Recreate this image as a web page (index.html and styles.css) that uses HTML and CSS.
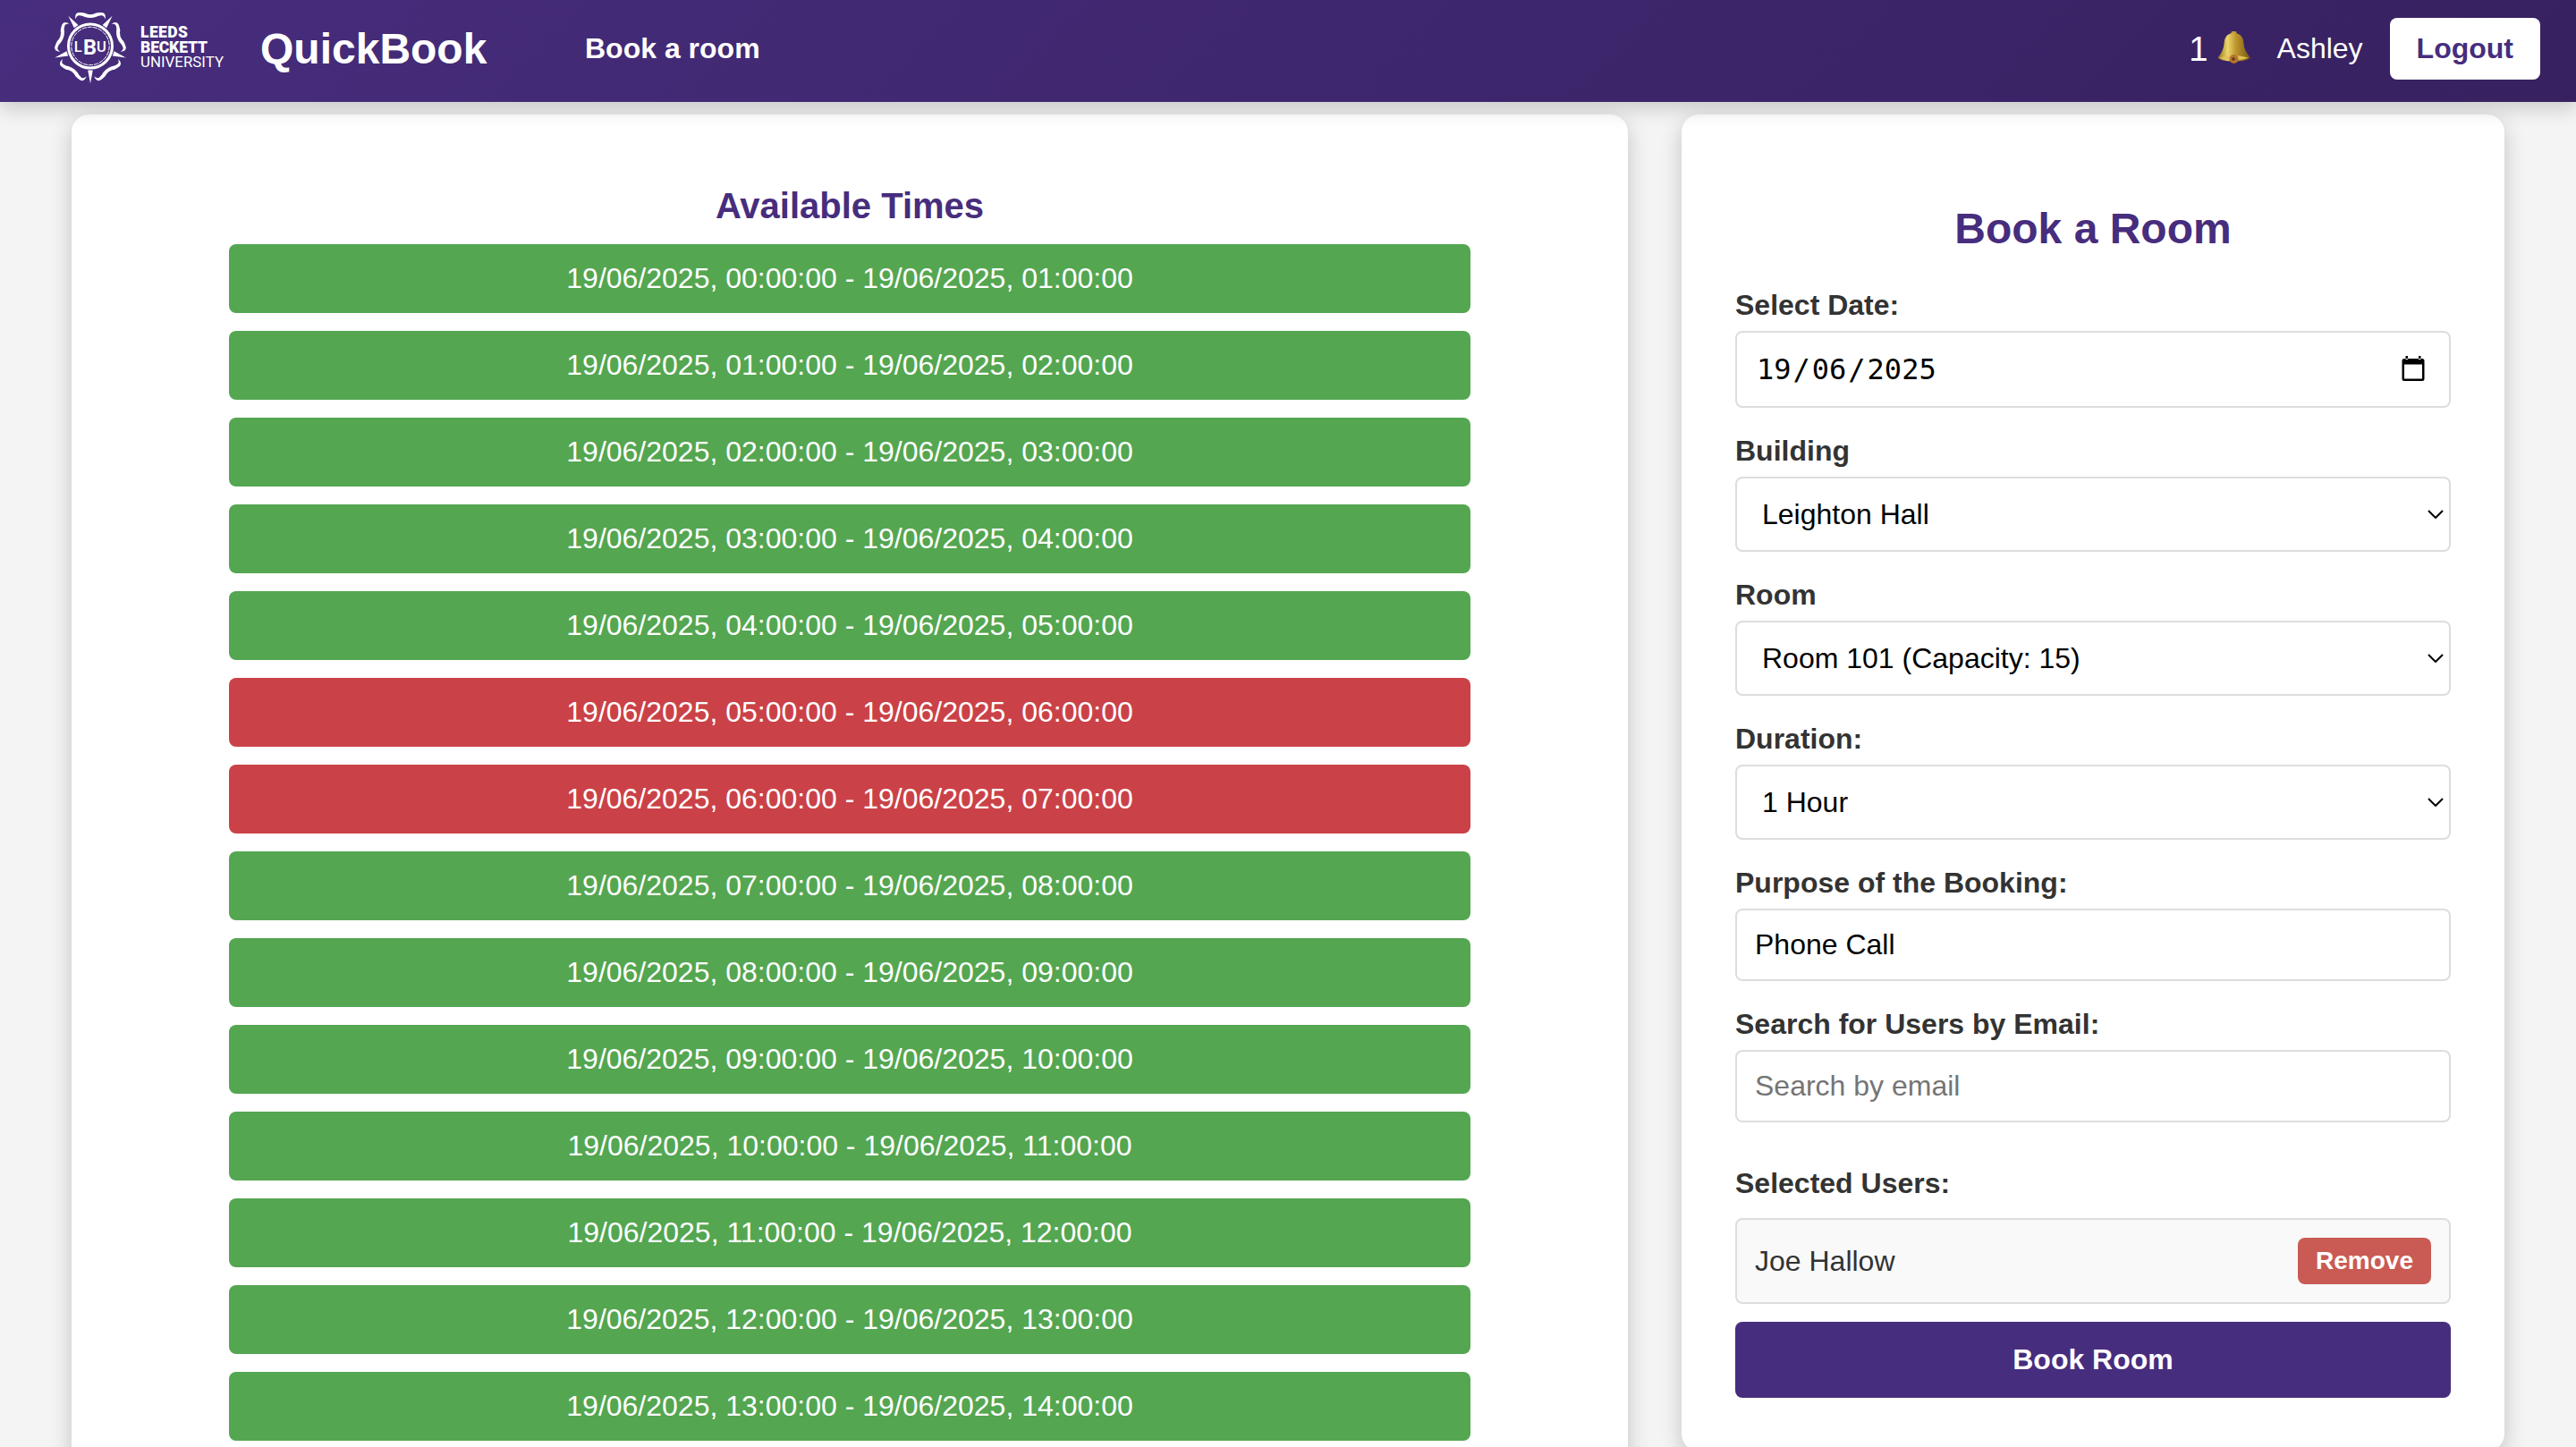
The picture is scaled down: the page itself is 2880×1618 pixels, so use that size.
FILE: index.html
```
<!DOCTYPE html>
<html lang="en">
<head>
<meta charset="utf-8">
<title>QuickBook</title>
<link rel="stylesheet" href="styles.css">
</head>
<body>
<header class="navbar">
  <svg class="logo" width="192" height="84" viewBox="0 0 192 84" role="img" aria-label="Leeds Beckett University">
    <g transform="translate(41 36.500)">
      <g fill="none" stroke="#fff">
        <circle r="24.500" stroke-width="3"/>
        <circle r="21.200" stroke-width="1" stroke-dasharray="5 1"/>
      </g>
      <g fill="#fff">
        <g id="petal">
          <path d="M-16.500 -30 Q-17.500 -34.500 -15.500 -36.500 Q-14 -38 -10 -37.500 Q-6 -37.500 -4 -36 Q0 -34.500 4 -36 Q6 -37.500 10 -37.500 Q14 -38 15.500 -36.500 Q17.500 -34.500 16.500 -30 Q15.500 -34 13 -34.300 Q9.500 -34.500 6 -32.500 Q0 -30.500 -6 -32.500 Q-9.500 -34.500 -13 -34.300 Q-15.500 -34 -16.500 -30 Z"/>
          <path transform="rotate(36)" d="M-2.800 -27 L0 -41.800 L2.800 -27 Z"/>
        </g>
        <use href="#petal" transform="rotate(72)"/>
        <use href="#petal" transform="rotate(144)"/>
        <use href="#petal" transform="rotate(216)"/>
        <use href="#petal" transform="rotate(288)"/>
      </g>
    </g>
    <g class="crest-text" fill="#fff">
      <text x="27.300" y="43" font-size="16.500" font-weight="500" text-anchor="middle">L</text>
      <text x="40.500" y="45.500" font-size="23.500" font-weight="700" text-anchor="middle">B</text>
      <text x="53.500" y="43" font-size="16.500" font-weight="500" text-anchor="middle">U</text>
      <text x="97" y="27.300" font-size="17.500" font-weight="900" textLength="53">LEEDS</text>
      <text x="97" y="43.700" font-size="17.500" font-weight="900" textLength="75">BECKETT</text>
      <text x="97" y="59.500" font-size="16.800" textLength="93">UNIVERSITY</text>
    </g>
  </svg>
  <div class="brand">QuickBook</div>
  <nav class="nav-links"><a>Book a room</a></nav>
  <div class="account">
    <div class="notifications">
      <span>1</span>
      <svg class="bell" width="38" height="38" viewBox="0 0 38 38">
        <defs>
          <linearGradient id="gold" x1="0" x2="1">
            <stop offset="0" stop-color="#8f7019"/><stop offset=".3" stop-color="#ecd56c"/>
            <stop offset=".55" stop-color="#bd972d"/><stop offset="1" stop-color="#755714"/>
          </linearGradient>
        </defs>
        <rect x="15.500" y="0" width="6" height="4" rx="1.500" fill="#c39b33"/>
        <path d="M7.500 14 Q8 2 18.500 2 Q29 2 29.500 14 Q30 22 37 29.500 Q33 33.500 18.500 33.500 Q4 33.500 .500 29.500 Q7 22 7.500 14 Z" fill="url(#gold)"/>
        <path d="M2.500 29.500 Q18 24.500 34.500 29.500 Q30 32 18.500 32 Q7 32 2.500 29.500 Z" fill="#e2c158"/>
        <circle cx="18.500" cy="31" r="5" fill="#b57430"/>
        <circle cx="18" cy="31" r="1.800" fill="#5a3a12"/>
      </svg>
    </div>
    <span class="user">Ashley</span>
    <button class="logout">Logout</button>
  </div>
</header>
<main class="page">
  <section class="card times">
    <h3>Available Times</h3>
    <ul class="slots">
      <li>19/06/2025, 00:00:00 - 19/06/2025, 01:00:00</li>
      <li>19/06/2025, 01:00:00 - 19/06/2025, 02:00:00</li>
      <li>19/06/2025, 02:00:00 - 19/06/2025, 03:00:00</li>
      <li>19/06/2025, 03:00:00 - 19/06/2025, 04:00:00</li>
      <li>19/06/2025, 04:00:00 - 19/06/2025, 05:00:00</li>
      <li class="booked">19/06/2025, 05:00:00 - 19/06/2025, 06:00:00</li>
      <li class="booked">19/06/2025, 06:00:00 - 19/06/2025, 07:00:00</li>
      <li>19/06/2025, 07:00:00 - 19/06/2025, 08:00:00</li>
      <li>19/06/2025, 08:00:00 - 19/06/2025, 09:00:00</li>
      <li>19/06/2025, 09:00:00 - 19/06/2025, 10:00:00</li>
      <li>19/06/2025, 10:00:00 - 19/06/2025, 11:00:00</li>
      <li>19/06/2025, 11:00:00 - 19/06/2025, 12:00:00</li>
      <li>19/06/2025, 12:00:00 - 19/06/2025, 13:00:00</li>
      <li>19/06/2025, 13:00:00 - 19/06/2025, 14:00:00</li>
    </ul>
  </section>
  <section class="card booking">
    <h2>Book a Room</h2>
    <div class="label">Select Date:</div>
    <div class="field date">
      <span>19<i>/</i>06<i>/</i>2025</span>
      <svg width="26" height="30" viewBox="0 0 26 30"><path d="M3 3h20a2.500 2.500 0 0 1 2.500 2.500v20a2.500 2.500 0 0 1-2.500 2.500H3a2.500 2.500 0 0 1-2.500-2.500v-20A2.500 2.500 0 0 1 3 3ZM3 9.500v16h20v-16ZM4.500 0h2.500v4h-2.500ZM19 0h2.500v4h-2.500Z" fill="#000" fill-rule="evenodd"/></svg>
    </div>
    <div class="label">Building</div>
    <div class="field select"><span>Leighton Hall</span><svg class="chevron" viewBox="0 0 18 10"><path d="M1 1l8 8 8-8"/></svg></div>
    <div class="label">Room</div>
    <div class="field select"><span>Room 101 (Capacity: 15)</span><svg class="chevron" viewBox="0 0 18 10"><path d="M1 1l8 8 8-8"/></svg></div>
    <div class="label">Duration:</div>
    <div class="field select"><span>1 Hour</span><svg class="chevron" viewBox="0 0 18 10"><path d="M1 1l8 8 8-8"/></svg></div>
    <div class="label">Purpose of the Booking:</div>
    <div class="field">Phone Call</div>
    <div class="label">Search for Users by Email:</div>
    <div class="field placeholder">Search by email</div>
    <div class="label selected-label">Selected Users:</div>
    <div class="selected-user"><span>Joe Hallow</span><button class="remove">Remove</button></div>
    <button class="submit">Book Room</button>
  </section>
</main>
</body>
</html>
```
FILE: styles.css
```
* { box-sizing: border-box; }
body {
  margin: 0;
  height: 1618px;
  overflow: hidden;
  background: #f4f4f4;
  color: #333;
  font: 32px/37px "Liberation Sans", Arial, sans-serif;
}
button { border: 0; font: inherit; font-weight: 700; }

.navbar {
  position: relative;
  z-index: 1;
  display: flex;
  align-items: center;
  height: 114px;
  padding: 0 40px 5px 60px;
  background: linear-gradient(135deg, #472d7d, #372160);
  box-shadow: 0 8px 20px rgba(0, 0, 0, .17);
  color: #fff;
}
.logo { margin: 5px 39px 0 0; overflow: visible; }
.crest-text { font-family: Roboto, "Liberation Sans", sans-serif; }
.brand { width: 254px; font-size: 48px; line-height: 55px; font-weight: 700; }
.nav-links { margin-left: 109px; font-weight: 700; }
.account { display: flex; align-items: center; margin-left: auto; }
.notifications { display: flex; align-items: center; gap: 10px; margin-right: 29px; font-size: 38.4px; }
.bell { margin-top: -2px; }
.user { margin-right: 30px; }
.logout { padding: 16px 30px; border-radius: 8px; background: #fff; color: #472d7d; }

.page { display: flex; align-items: flex-start; gap: 60px; padding: 14px 80px 0; }
.card { border-radius: 20px; background: #fff; box-shadow: 0 8px 24px rgba(0, 0, 0, .2); }
.times { width: 1740px; height: 1600px; padding: 79px 176px 0; }
.times h3 { margin: 0 0 20px; font-size: 40px; line-height: 46px; color: #472d7d; text-align: center; }
.slots { display: grid; gap: 20px; margin: 0; padding: 0; list-style: none; }
.slots li { padding: 20px; border-radius: 8px; background: #54a651; color: #fff; text-align: center; }
.slots .booked { background: #ca4248; }

.booking { width: 920px; padding: 100px 60px 60px; }
.booking h2 { margin: 0 0 40px; font-size: 48px; line-height: 55px; color: #472d7d; text-align: center; }
.label { margin: 30px 0 10px; font-weight: 700; }
.field {
  display: flex;
  align-items: center;
  justify-content: space-between;
  height: 81px;
  padding: 0 20px;
  border: 2px solid #ddd;
  border-radius: 8px;
  color: #000;
}
.date { height: 86px; padding: 0 27px 0 22px; font-family: "DejaVu Sans Mono", monospace; }
.date i { padding: 0 2px; font-style: normal; }
.select { height: 84px; padding: 0 6px 0 28px; }
.chevron { width: 18px; height: 10px; fill: none; stroke: #000; stroke-width: 2; }
.placeholder { color: #757575; }
.selected-label { margin: 50px 0 20px; }
.selected-user {
  display: flex;
  align-items: center;
  justify-content: space-between;
  height: 96px;
  padding: 0 20px;
  border: 2px solid #ddd;
  border-radius: 8px;
  background: #f9f9f9;
}
.remove { height: 52px; padding: 0 20px; border-radius: 8px; background: #c95b54; color: #fff; font-size: 28px; line-height: 32px; }
.submit { display: block; width: 100%; height: 85px; margin-top: 20px; border-radius: 8px; background: #472d7d; color: #fff; }
```
